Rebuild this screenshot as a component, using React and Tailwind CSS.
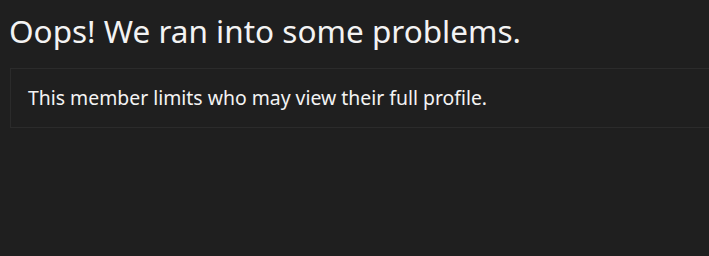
import React from "react";

const App = () => {
  return (
    <div
      className="w-[709px] h-[256px] overflow-hidden bg-[#1f1f1f] text-[#f3f3f3]"
      style={{ fontFamily: '"Noto Sans", "Open Sans", sans-serif' }}
    >
      <h1 className="pl-[9px] pt-[11px] text-[31.5px] leading-[40px] font-normal">
        Oops! We ran into some problems.
      </h1>
      <div className="ml-[10px] mr-[-20px] mt-[17px] h-[60px] border border-[#2b2b2b] pl-[17px] flex items-center">
        <p className="text-[19.4px] leading-[26px]">
          This member limits who may view their full profile.
        </p>
      </div>
    </div>
  );
};

export default App;
